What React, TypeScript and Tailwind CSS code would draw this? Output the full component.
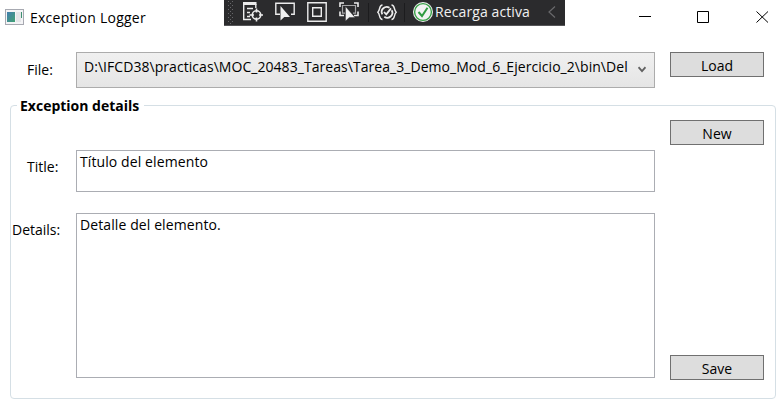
import type { ReactNode } from 'react';

function Tool({ children, className }: { children: ReactNode; className: string }) {
  return (
    <svg viewBox="0 0 20 22" className={`h-[22px] w-5 shrink-0 ${className}`} fill="none" stroke="#ececec" strokeWidth="1.4">
      {children}
    </svg>
  );
}

const cursor = 'M0 0V14.5L3.8 11H9.5Z';

function DebugBar() {
  return (
    <div className="absolute left-[224px] top-0 flex h-[26px] w-[341px] items-start border-b border-[#555558] bg-[#2b2b2d]">
      <svg viewBox="0 0 8 24" className="ml-[3px] h-6 w-2 shrink-0" fill="#68686b">
        {[0, 4, 8, 12, 16, 20].map((y) => (
          <g key={y}>
            <rect x="1" y={y + 1} width="1" height="1" />
            <rect x="5" y={y + 1} width="1" height="1" />
            <rect x="3" y={y + 3} width="1" height="1" />
          </g>
        ))}
      </svg>
      <Tool className="ml-2">
        <path d="M0 3.5H13.5" strokeWidth="3" />
        <path d="M.7 3V19.5H8M12.8 4V8M4 8.5H10M4 12.5H7M4 16.5H7" />
        <circle cx="13.5" cy="15" r="4.2" strokeWidth="1.6" />
        <path d="M13.5 8.5V12.5M13.5 17.5V21.5M6.5 15H11M16 15H20" strokeWidth="1.6" />
      </Tool>
      <Tool className="ml-3">
        <path d="M5 14.3H.8V3.2H19.2V14.3H16" />
        <path d={cursor} transform="translate(5.5 6)" fill="#f1f1f1" stroke="none" />
      </Tool>
      <Tool className="ml-3">
        <path d="M.8 2.8H19.2V21.2H.8ZM5.7 7.7H14.3V16.3H5.7Z" />
      </Tool>
      <Tool className="ml-3">
        <path d="M1 7V3H5M15 3H19V7M1 11.5V15.5H5M19 11.5V15.5H15" strokeWidth="1.6" />
        <path d="M6 13.2H3.5V5.5H16.5V13.2H14" stroke="#a5a5a7" strokeWidth="1.2" />
        <path d={cursor} transform="translate(6.5 6.5)" fill="#f1f1f1" stroke="#2b2b2d" strokeWidth=".4" />
      </Tool>
      <div className="ml-[9px] mt-[3px] h-[19px] w-px bg-[#1c1c1e]" />
      <Tool className="ml-2">
        <path d="M5.5 5C1.8 5 3.4 10 .8 12.3C3.4 14.5 1.8 19.5 5.5 19.5M14.5 5C18.2 5 16.6 10 19.2 12.3C16.6 14.5 18.2 19.5 14.5 19.5" />
        <path d="M5.3 14.3A5 5 0 0 1 12.5 7.8M14.7 10.3A5 5 0 0 1 7.3 16.7M7 12L9.3 14.4L14 8.4" strokeWidth="1.8" />
      </Tool>
      <div className="ml-[7px] mt-[3px] h-[19px] w-px bg-[#1c1c1e]" />
      <svg viewBox="0 0 20 20" className="ml-2 mt-[2px] size-5 shrink-0" fill="none">
        <circle cx="10" cy="10" r="10" fill="#f3f3f3" />
        <circle cx="10" cy="10" r="8.4" stroke="#38a047" strokeWidth="1.4" />
        <path d="M5.5 10L9 14L14.5 5.8" stroke="#309b40" strokeWidth="2" />
      </svg>
      <span className="ml-[2px] mt-[2px] w-[97px] whitespace-nowrap text-[14px] leading-5 tracking-[0.1px] text-[#f1f1f1]">Recarga activa</span>
      <svg viewBox="0 0 8 12" className="ml-[16px] mt-[6px] h-3 w-2 shrink-0" fill="none" stroke="#69696c" strokeWidth="1.2">
        <path d="M7 .5L1 6L7 11.5" />
      </svg>
    </div>
  );
}

function AppIcon() {
  return (
    <svg viewBox="0 0 19 16" className="h-4 w-[19px]">
      <defs>
        <linearGradient id="screen" x1="0" y1="0" x2="1" y2="1">
          <stop stopColor="#427eaf" />
          <stop offset="1" stopColor="#42a173" />
        </linearGradient>
      </defs>
      <rect x=".5" y=".5" width="18" height="15" fill="#f4f4f6" stroke="#a7a9b1" />
      <rect x="2" y="3" width="8" height="10" fill="url(#screen)" />
      <rect x="11" y="3" width="5" height="10" fill="#e4e5e8" />
      <rect x="16" y="3" width="1" height="6" fill="#3d9070" />
    </svg>
  );
}

function Button({ children, className = '' }: { children: ReactNode; className?: string }) {
  return (
    <button className={`h-[25px] w-[94px] shrink-0 border border-[#707070] bg-[#dddddd] text-[14px] leading-[25px] ${className}`}>
      {children}
    </button>
  );
}

export default function App() {
  return (
    <div className="relative h-[407px] w-[783px] overflow-hidden bg-white font-['Open_Sans',sans-serif] text-[14px] leading-5 text-black">
      <header className="flex h-[33px] items-center pl-[5px]">
        <AppIcon />
        <h1 className="ml-[6px] mt-[2px] tracking-[0.25px]">Exception Logger</h1>
        <svg viewBox="0 0 130 12" className="ml-auto mr-[14px] h-3 w-[130px]" fill="none" stroke="#000">
          <path d="M0 5.5H12M58.5 .5H69.5V11.5H58.5Z" />
          <path d="M117.5 .5L129 11.5M129 .5L117.5 11.5" />
        </svg>
      </header>
      <DebugBar />
      <section className="mt-[19px] flex h-9">
        <label className="w-[76px] pl-[27px] pt-2">File:</label>
        <div className="flex w-[579px] justify-between border border-[#acacac] bg-gradient-to-b from-[#f0f0f0] to-[#e5e5e5]">
          <span className="ml-[7px] mt-1 w-[544px] overflow-hidden whitespace-nowrap tracking-[0.05px]">
            {'D:\\IFCD38\\practicas\\MOC_20483_Tareas\\Tarea_3_Demo_Mod_6_Ejercicio_2\\bin\\Del'}
          </span>
          <svg viewBox="0 0 8 7" className="mr-2 mt-[13px] h-[7px] w-2" fill="none" stroke="#606060" strokeWidth="1.8">
            <path d="M.5 1.2L4 5.2L7.5 1.2" />
          </svg>
        </div>
        <Button className="ml-[15px]">Load</Button>
      </section>
      <fieldset className="ml-[10px] mt-[9px] h-[302px] w-[766px] rounded-[4px] border border-[#d5dfe5]">
        <legend className="ml-[6px] h-[17px] w-[127px] whitespace-nowrap pl-[3px] font-bold leading-[17px]">Exception details</legend>
        <div className="flex">
          <div className="w-[65px]">
            <label className="mt-[43px] block pl-4">Title:</label>
            <label className="mt-[43px] block pl-px">Details:</label>
          </div>
          <div className="w-[579px] pt-9">
            <div className="h-[42px] border border-[#abadb3] pl-[3px] pt-px tracking-[0.1px]">Título del elemento</div>
            <div className="mt-[21px] h-[165px] border border-[#abadb3] pl-[3px] pt-px tracking-[0.1px]">Detalle del elemento.</div>
          </div>
          <div className="ml-[15px] flex h-[266px] flex-col justify-between pt-[6px]">
            <Button>New</Button>
            <Button>Save</Button>
          </div>
        </div>
      </fieldset>
    </div>
  );
}
